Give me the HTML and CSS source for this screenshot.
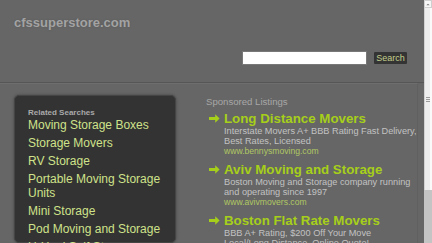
FILE: index.html
```html
<!DOCTYPE html>
<html>
<head>
<meta charset="utf-8">
<link rel="stylesheet" href="styles.css">
</head>
<body>
<div class="viewport">
  <div class="page">
    <header class="header">
      <div class="logo">cfssuperstore.com</div>
      <form class="search">
        <input class="search-input" type="text">
        <button class="search-btn" type="button">Search</button>
      </form>
    </header>
    <main class="main">
      <section class="related">
        <div class="related-head">Related Searches</div>
        <a class="rel-link">Moving Storage Boxes</a>
        <a class="rel-link">Storage Movers</a>
        <a class="rel-link">RV Storage</a>
        <a class="rel-link">Portable Moving Storage Units</a>
        <a class="rel-link">Mini Storage</a>
        <a class="rel-link">Pod Moving and Storage</a>
        <a class="rel-link">U-Haul Self Storage</a>
        <a class="rel-link">Moving Companies</a>
      </section>
      <section class="sponsored">
        <div class="sponsored-head">Sponsored Listings</div>
        <div class="ad">
          <div class="arrow"><svg width="11" height="9" viewBox="0 0 11 9"><path d="M0 3.1h6.2V0.3L10.6 4.5 6.2 8.7V5.9H0z" fill="#a6cf1a"/></svg></div>
          <div class="ad-body">
            <div class="ad-title">Long Distance Movers</div>
            <div class="ad-desc">Interstate Movers A+ BBB Rating Fast Delivery,<br>Best Rates, Licensed</div>
            <div class="ad-url">www.bennysmoving.com</div>
          </div>
        </div>
        <div class="ad">
          <div class="arrow"><svg width="11" height="9" viewBox="0 0 11 9"><path d="M0 3.1h6.2V0.3L10.6 4.5 6.2 8.7V5.9H0z" fill="#a6cf1a"/></svg></div>
          <div class="ad-body">
            <div class="ad-title">Aviv Moving and Storage</div>
            <div class="ad-desc">Boston Moving and Storage company running<br>and operating since 1997</div>
            <div class="ad-url">www.avivmovers.com</div>
          </div>
        </div>
        <div class="ad">
          <div class="arrow"><svg width="11" height="9" viewBox="0 0 11 9"><path d="M0 3.1h6.2V0.3L10.6 4.5 6.2 8.7V5.9H0z" fill="#a6cf1a"/></svg></div>
          <div class="ad-body">
            <div class="ad-title">Boston Flat Rate Movers</div>
            <div class="ad-desc">BBB A+ Rating, $200 Off Your Move<br>Local/Long Distance, Online Quote!</div>
            <div class="ad-url">www.bostonflatratemovers.com</div>
          </div>
        </div>
      </section>
    </main>
  </div>
  <div class="scrollbar">
    <div class="sb-btn"><svg width="7" height="7" viewBox="0 0 7 7"><path d="M1.5 4.5L3.5 2.5 5.5 4.5z" fill="#777"/></svg></div>
    <div class="sb-thumb"><div class="grip"></div></div>
    <div class="sb-track"></div>
  </div>
</div>
</body>
</html>
```
FILE: styles.css
```css
html, body {
  margin: 0;
  height: 243px;
  overflow: hidden;
  background: #666666;
  font-family: "Liberation Sans", Arial, sans-serif;
}

.viewport {
  display: flex;
  height: 243px;
}

.page {
  flex: 1;
  min-width: 0;
  display: flex;
  flex-direction: column;
}

.header {
  height: 83px;
  box-sizing: border-box;
  padding: 15px 17px 0 14px;
  border-bottom: 1px solid #565656;
  display: flex;
  flex-direction: column;
  flex-shrink: 0;
}

.logo {
  font-size: 13px;
  font-weight: bold;
  line-height: 16px;
  color: #a3a3a3;
  text-shadow: 0 0 2px #585858;
}

.search {
  margin: 21px 0 0;
  display: flex;
  justify-content: flex-end;
  gap: 8px;
}

.search-input {
  width: 123px;
  height: 12px;
  box-sizing: border-box;
  margin: 0;
  padding: 0;
  border: none;
  background: #ffffff;
  box-shadow: 0 0 0 1px #787878;
}

.search-btn {
  width: 33px;
  height: 12px;
  margin: 0;
  padding: 0;
  border: none;
  border-radius: 1px;
  background: #343434;
  color: #c3cf8c;
  font-family: "Liberation Sans", Arial, sans-serif;
  font-size: 9px;
  line-height: 12px;
  text-align: center;
}

.main {
  flex: 1;
  min-height: 0;
  width: 418px;
  box-sizing: border-box;
  border-top: 1px solid #6e6e6e;
  border-right: 1px solid #606060;
  padding-left: 14px;
  display: flex;
  overflow: hidden;
}

.related {
  width: 162px;
  flex-shrink: 0;
  box-sizing: border-box;
  margin-top: 11px;
  padding: 12px 13px 0 13px;
  background: #333333;
  border: 1px solid #454545;
  border-radius: 5px;
  box-shadow: 0 0 3px rgba(0, 0, 0, 0.35);
  display: flex;
  flex-direction: column;
  gap: 4px;
}

.related-head {
  font-size: 8px;
  font-weight: bold;
  line-height: 10px;
  color: #a9a9a9;
  margin-bottom: -4px;
}

.rel-link {
  font-size: 12px;
  line-height: 14px;
  color: #cfe28a;
}

.sponsored {
  flex: 1;
  min-width: 0;
  margin-left: 30px;
  padding-top: 13px;
}

.sponsored-head {
  font-size: 9.6px;
  line-height: 10px;
  color: #a6a6a6;
  margin-bottom: 4px;
}

.ad {
  display: grid;
  grid-template-columns: 15px 1fr;
  padding-left: 3px;
  margin-bottom: 6px;
}

.arrow {
  height: 15px;
  display: flex;
  align-items: center;
}

.ad-title {
  font-size: 13.3px;
  font-weight: bold;
  line-height: 15px;
  color: #a6cf1a;
  white-space: nowrap;
}

.ad-desc {
  font-size: 9.2px;
  line-height: 10px;
  color: #c2c2c2;
  white-space: nowrap;
}

.ad-url {
  font-size: 8.6px;
  line-height: 10px;
  color: #b0c763;
  white-space: nowrap;
}

.scrollbar {
  width: 8px;
  flex-shrink: 0;
  display: flex;
  flex-direction: column;
  background: #c6c6c6;
}

.sb-btn {
  height: 8px;
  box-sizing: border-box;
  background: #f6f6f6;
  border: 1px solid #cfcfcf;
  display: flex;
  align-items: center;
  justify-content: center;
}

.sb-thumb {
  height: 182px;
  box-sizing: border-box;
  background: #ededed;
  border-left: 1px solid #d2d2d2;
  border-right: 2px solid #fafafa;
  display: flex;
  align-items: center;
  justify-content: center;
}

.grip {
  width: 4px;
  height: 5px;
  background: repeating-linear-gradient(#9a9a9a 0 1px, transparent 1px 2px);
}

.sb-track {
  flex: 1;
  background: #c4c4c4;
}
```
